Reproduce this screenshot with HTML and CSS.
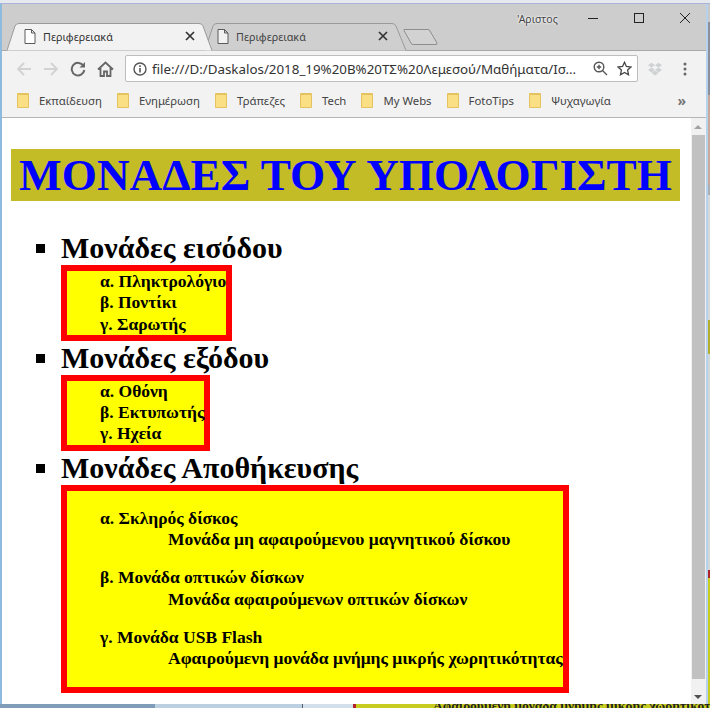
FILE: index.html
```html
<!DOCTYPE html>
<html lang="el">
<head>
    <meta charset="UTF-8">
    <meta name="viewport" content="width=device-width, initial-scale=1.0">
    <title>Περιφερειακά</title>
    <link rel="stylesheet" href="styles.css">
</head>
<body>
    <div class="behind-top"></div>
    <div class="desktop-row">
        <div class="window">
            <div class="tabstrip">
                <div class="tab tab-active">
                    <svg class="tab-shape" width="206" height="28" viewBox="0 0 206 28"><path d="M0 27.5 L8 3 Q9 .5 12 .5 L192 .5 Q195 .5 196 3 L205 27.5" fill="#f2f2f2" stroke="#9a9a9a"/></svg>
                    <svg class="doc-icon" width="12" height="15" viewBox="0 0 12 15"><path d="M1 .5 H7.5 L11 4 V14.5 H1 Z M7.5 .5 V4 H11" fill="#fff" stroke="#5a5a5a"/></svg>
                    <span class="tab-title">Περιφερειακά</span>
                    <svg class="tab-close" width="10" height="10" viewBox="0 0 10 10"><path d="M1 1 L9 9 M9 1 L1 9" stroke="#333" stroke-width="1.7"/></svg>
                </div>
                <div class="tab tab-back">
                    <svg class="tab-shape" width="202" height="28" viewBox="0 0 202 28"><path d="M0 27.5 L8 3 Q9 .5 12 .5 L187 .5 Q190 .5 191 3 L201 27.5" fill="#cfcfcf" stroke="#9a9a9a"/></svg>
                    <svg class="doc-icon" width="12" height="15" viewBox="0 0 12 15"><path d="M1 .5 H7.5 L11 4 V14.5 H1 Z M7.5 .5 V4 H11" fill="#f2f2f2" stroke="#5a5a5a"/></svg>
                    <span class="tab-title">Περιφερειακά</span>
                    <svg class="tab-close" width="10" height="10" viewBox="0 0 10 10"><path d="M1 1 L9 9 M9 1 L1 9" stroke="#333" stroke-width="1.7"/></svg>
                </div>
                <svg class="new-tab" width="36" height="18" viewBox="0 0 36 18"><path d="M1 1.5 H25 Q26.5 1.5 27 3 L34 15 Q34.500 16.500 33 16.500 H10 Q8.500 16.500 8 15 L1 2.500 Z" fill="#d2d2d2" stroke="#8e8e8e"/></svg>
                <div class="profile">'Αριστος</div>
                <div class="win-controls">
                    <svg width="12" height="12" viewBox="0 0 12 12"><path d="M1 6.500 H11" stroke="#222"/></svg>
                    <svg width="12" height="12" viewBox="0 0 12 12"><rect x="1.500" y="1.500" width="9" height="9" fill="none" stroke="#222"/></svg>
                    <svg width="12" height="12" viewBox="0 0 12 12"><path d="M1 1 L11 11 M11 1 L1 11" stroke="#222"/></svg>
                </div>
            </div>

            <div class="toolbar">
                <div class="nav-icons">
                    <svg width="16" height="16" viewBox="0 0 16 16"><path d="M15 8 H2 M8 2 L2 8 L8 14" fill="none" stroke="#d2d2d2" stroke-width="1.800"/></svg>
                    <svg width="16" height="16" viewBox="0 0 16 16"><path d="M1 8 H14 M8 2 L14 8 L8 14" fill="none" stroke="#d2d2d2" stroke-width="1.800"/></svg>
                    <svg width="16" height="16" viewBox="0 0 16 16"><path d="M13.500 5 A6.300 6.300 0 1 0 14.300 9" fill="none" stroke="#666" stroke-width="2"/><path d="M15 1 V6.500 H9.500 Z" fill="#666"/></svg>
                    <svg width="17" height="16" viewBox="0 0 17 16"><path d="M1 8.500 L8.500 1.500 L16 8.500 M3.500 7 V15 H7 V10.500 H10 V15 H13.500 V7" fill="none" stroke="#666" stroke-width="1.800"/></svg>
                </div>
                <div class="omnibox">
                    <svg class="info-icon" width="14" height="14" viewBox="0 0 14 14"><circle cx="7" cy="7" r="6" fill="none" stroke="#555" stroke-width="1.400"/><path d="M7 6 V10.500 M7 3.300 V4.900" stroke="#555" stroke-width="1.600"/></svg>
                    <span class="url">file:///D:/Daskalos/2018_19%20Β%20ΤΣ%20Λεμεσού/Μαθήματα/Ισ...</span>
                    <svg width="15" height="15" viewBox="0 0 15 15"><circle cx="6" cy="6" r="4.800" fill="none" stroke="#555" stroke-width="1.400"/><path d="M9.500 9.500 L14 14 M3.800 6 H8.200 M6 3.800 V8.200" stroke="#555" stroke-width="1.400"/></svg>
                    <svg class="star" width="15" height="15" viewBox="0 0 15 15"><path d="M7.500 1.300 L9.400 5.500 L14 6 L10.600 9.100 L11.500 13.700 L7.500 11.400 L3.500 13.700 L4.400 9.100 L1 6 L5.600 5.500 Z" fill="none" stroke="#444" stroke-width="1.300"/></svg>
                </div>
                <svg class="dropbox" width="14" height="14" viewBox="0 0 14 14"><path d="M3.500 .8 L7 3.200 L3.500 5.600 L0 3.200 Z M10.500 .8 L14 3.200 L10.500 5.600 L7 3.200 Z M3.500 5.600 L7 8 L3.500 10.400 L0 8 Z M10.500 5.600 L14 8 L10.500 10.400 L7 8 Z M7 8.800 L10.500 11 L7 13.400 L3.500 11 Z" fill="#cfd2d2"/></svg>
                <svg class="menu-dots" width="4" height="14" viewBox="0 0 4 14"><circle cx="2" cy="2" r="1.500" fill="#666"/><circle cx="2" cy="7" r="1.500" fill="#666"/><circle cx="2" cy="12" r="1.500" fill="#666"/></svg>
            </div>

            <div class="bookmarks">
                <div class="bookmark"><span class="folder"></span>Εκπαίδευση</div>
                <div class="bookmark"><span class="folder"></span>Ενημέρωση</div>
                <div class="bookmark"><span class="folder"></span>Τράπεζες</div>
                <div class="bookmark"><span class="folder"></span>Tech</div>
                <div class="bookmark"><span class="folder"></span>My Webs</div>
                <div class="bookmark"><span class="folder"></span>FotoTips</div>
                <div class="bookmark"><span class="folder"></span>Ψυχαγωγία</div>
                <div class="more">»</div>
            </div>

            <div class="viewport">
                <div class="page">
                    <h1 class="page-title">ΜΟΝΑΔΕΣ ΤΟΥ ΥΠΟΛΟΓΙΣΤΗ</h1>
                    <ul class="units">
                        <li>
                            Μονάδες εισόδου
                            <div class="box">
                                <div class="entry">α. Πληκτρολόγιο</div>
                                <div class="entry">β. Ποντίκι</div>
                                <div class="entry">γ. Σαρωτής</div>
                            </div>
                        </li>
                        <li>
                            Μονάδες εξόδου
                            <div class="box">
                                <div class="entry">α. Οθόνη</div>
                                <div class="entry">β. Εκτυπωτής</div>
                                <div class="entry">γ. Ηχεία</div>
                            </div>
                        </li>
                        <li>
                            Μονάδες Αποθήκευσης
                            <div class="box">
                                <dl class="term">
                                    <dt>α. Σκληρός δίσκος</dt>
                                    <dd>Μονάδα μη αφαιρούμενου μαγνητικού δίσκου</dd>
                                </dl>
                                <dl class="term">
                                    <dt>β. Μονάδα οπτικών δίσκων</dt>
                                    <dd>Μονάδα αφαιρούμενων οπτικών δίσκων</dd>
                                </dl>
                                <dl class="term">
                                    <dt>γ. Μονάδα USB Flash</dt>
                                    <dd>Αφαιρούμενη μονάδα μνήμης μικρής χωρητικότητας</dd>
                                </dl>
                            </div>
                        </li>
                    </ul>
                </div>
                <div class="scrollbar">
                    <div class="arrow-up"></div>
                    <div class="thumb"></div>
                    <div class="arrow-down"></div>
                </div>
            </div>
        </div>
        <div class="behind-side"></div>
    </div>
    <div class="behind-bottom">
        <div class="strip-a"></div>
        <div class="strip-b"></div>
        <div class="strip-c"></div>
        <div class="strip-d">Αφαιρούμενη μονάδα μνήμης μικρής χωρητικότητας</div>
    </div>
</body>
</html>
```

FILE: styles.css
```css
* {
    box-sizing: border-box;
}

body {
    margin: 0;
    width: 710px;
    height: 708px;
    overflow: hidden;
    display: flex;
    flex-direction: column;
    background-color: #e8edf2;
    font-family: "Noto Sans", sans-serif;
}

.behind-top {
    height: 4px;
    background-color: #e6eaee;
    border-bottom: 1px solid #a9b4d8;
}

.desktop-row {
    height: 700px;
    display: flex;
}

.window {
    width: 708px;
    display: flex;
    flex-direction: column;
    border-left: 2px solid #8dbbdd;
    border-right: 2px solid #b7d2ec;
    background-color: #fff;
}

.behind-side {
    flex: 1;
    background: linear-gradient(
        #c8c8c8 0, #c8c8c8 18px,
        #8a8f9a 18px, #8a8f9a 91px,
        #c9a99a 91px, #c9a99a 181px,
        #a8aeb4 181px, #a8aeb4 191px,
        #d4d8d8 191px, #d4d8d8 316px,
        #b5ad30 316px, #b5ad30 350px,
        #cfd8d8 350px, #cfd8d8 566px,
        #b0222a 566px, #b0222a 574px,
        #c6cc20 574px, #c6cc20 100%
    );
}

/* tabs */
.tabstrip {
    height: 46px;
    display: flex;
    align-items: flex-end;
    background-color: #cdcdcd;
    padding-left: 5px;
    position: relative;
}

.tab {
    position: relative;
    width: 198px;
    height: 28px;
    display: flex;
    align-items: center;
    font-size: 10.800px;
    color: #333;
}

.tab-shape {
    position: absolute;
    left: 0;
    top: 1px;
}

.tab-active {
    z-index: 2;
    padding-left: 17px;
}

.tab-back {
    z-index: 1;
    padding-left: 12px;
}

.doc-icon,
.tab-title,
.tab-close {
    position: relative;
}

.tab-title {
    margin-left: 7px;
    width: 142px;
}

.tab-back .tab-title {
    color: #444;
}

.new-tab {
    margin-bottom: 4px;
    position: relative;
}

.profile {
    position: absolute;
    top: 8px;
    left: 515px;
    font-size: 10.500px;
    color: #444;
    text-shadow: 0 0 3px #fff, 0 0 2px #fff;
}

.win-controls {
    position: absolute;
    top: 8px;
    left: 585px;
    display: flex;
    gap: 34px;
}

/* toolbar */
.toolbar {
    height: 36px;
    display: flex;
    align-items: center;
    background-color: #f2f2f2;
    border-top: 1px solid #a8a8a8;
}

.nav-icons {
    width: 123px;
    padding-left: 14px;
    display: flex;
    gap: 11px;
}

.omnibox {
    width: 513px;
    height: 27px;
    display: flex;
    align-items: center;
    gap: 9px;
    padding: 0 5px 0 7px;
    background-color: #fff;
    border: 1px solid #bdbdbd;
    border-radius: 2px;
}

.info-icon {
    margin-right: -4px;
}

.url {
    flex: 1;
    white-space: nowrap;
    overflow: hidden;
    font-size: 13.350px;
    color: #333;
}

.dropbox {
    margin-left: 10px;
}

.menu-dots {
    margin-left: 21px;
}

/* bookmarks */
.bookmarks {
    height: 32px;
    display: flex;
    align-items: center;
    padding: 0 0 2px 15px;
    gap: 15px;
    background-color: #f2f2f2;
    border-bottom: 1px solid #b5b5b5;
    font-size: 11.350px;
    color: #444;
}

.bookmark {
    display: flex;
    align-items: center;
    gap: 10px;
}

.folder {
    width: 12px;
    height: 15px;
    background-color: #fbdf85;
    border: 1px solid #e3c25f;
    border-top-width: 2px;
    border-radius: 1px;
}

.more {
    margin-left: auto;
    margin-right: 20px;
    font-size: 14px;
    font-weight: bold;
    color: #777;
}

/* page */
.viewport {
    flex: 1;
    min-height: 0;
    display: flex;
    background-color: #fff;
}

.page {
    flex: 1;
    padding: 31px 11px 0 9px;
    font-family: "Liberation Serif", serif;
    font-weight: bold;
    color: #000;
}

.page-title {
    margin: 0;
    height: 52px;
    line-height: 52px;
    text-align: center;
    white-space: nowrap;
    font-size: 45.200px;
    color: #00f;
    background-color: #c4bc26;
}

.units {
    margin: 30px 0 0;
    padding-left: 50px;
    list-style-type: square;
}

.units li {
    font-size: 30px;
    line-height: 34px;
}

.box {
    width: fit-content;
    padding-left: 33px;
    background-color: #ff0;
    border: 6px solid #f00;
    font-size: 17.500px;
    line-height: 21.300px;
}

.term {
    margin: 17px 0;
}

.term dd {
    margin-left: 68px;
}

/* scrollbar */
.scrollbar {
    width: 15px;
    display: flex;
    flex-direction: column;
    padding: 0 1px;
    background-color: #f1f1f1;
}

.thumb {
    flex: 1;
    margin-bottom: 8px;
    background-color: #c1c1c1;
}

.arrow-up,
.arrow-down {
    height: 17px;
    position: relative;
}

.arrow-up::after,
.arrow-down::after {
    content: "";
    position: absolute;
    left: 2px;
    border-left: 4px solid transparent;
    border-right: 4px solid transparent;
}

.arrow-up::after {
    top: 7px;
    border-bottom: 4px solid #a3a3a3;
}

.arrow-down::after {
    top: 8px;
    border-top: 4px solid #505050;
}

.behind-bottom {
    height: 4px;
    display: flex;
    overflow: hidden;
}

.strip-a {
    flex: none;
    width: 155px;
    background-color: #7f9cb8;
}

.strip-b {
    flex: none;
    width: 148px;
    background-color: #bcd0e2;
    border-right: 1px solid #55606c;
}

.strip-c {
    flex: none;
    width: 53px;
    background-color: #d3dfea;
    border-right: 3px solid #b0222a;
}

.strip-d {
    flex: 1;
    min-width: 0;
    overflow: hidden;
    padding-left: 77px;
    background-color: #c6cc20;
    font-family: "Liberation Serif", serif;
    font-size: 13.500px;
    font-weight: bold;
    line-height: 4px;
    white-space: nowrap;
    color: #222;
}
```
